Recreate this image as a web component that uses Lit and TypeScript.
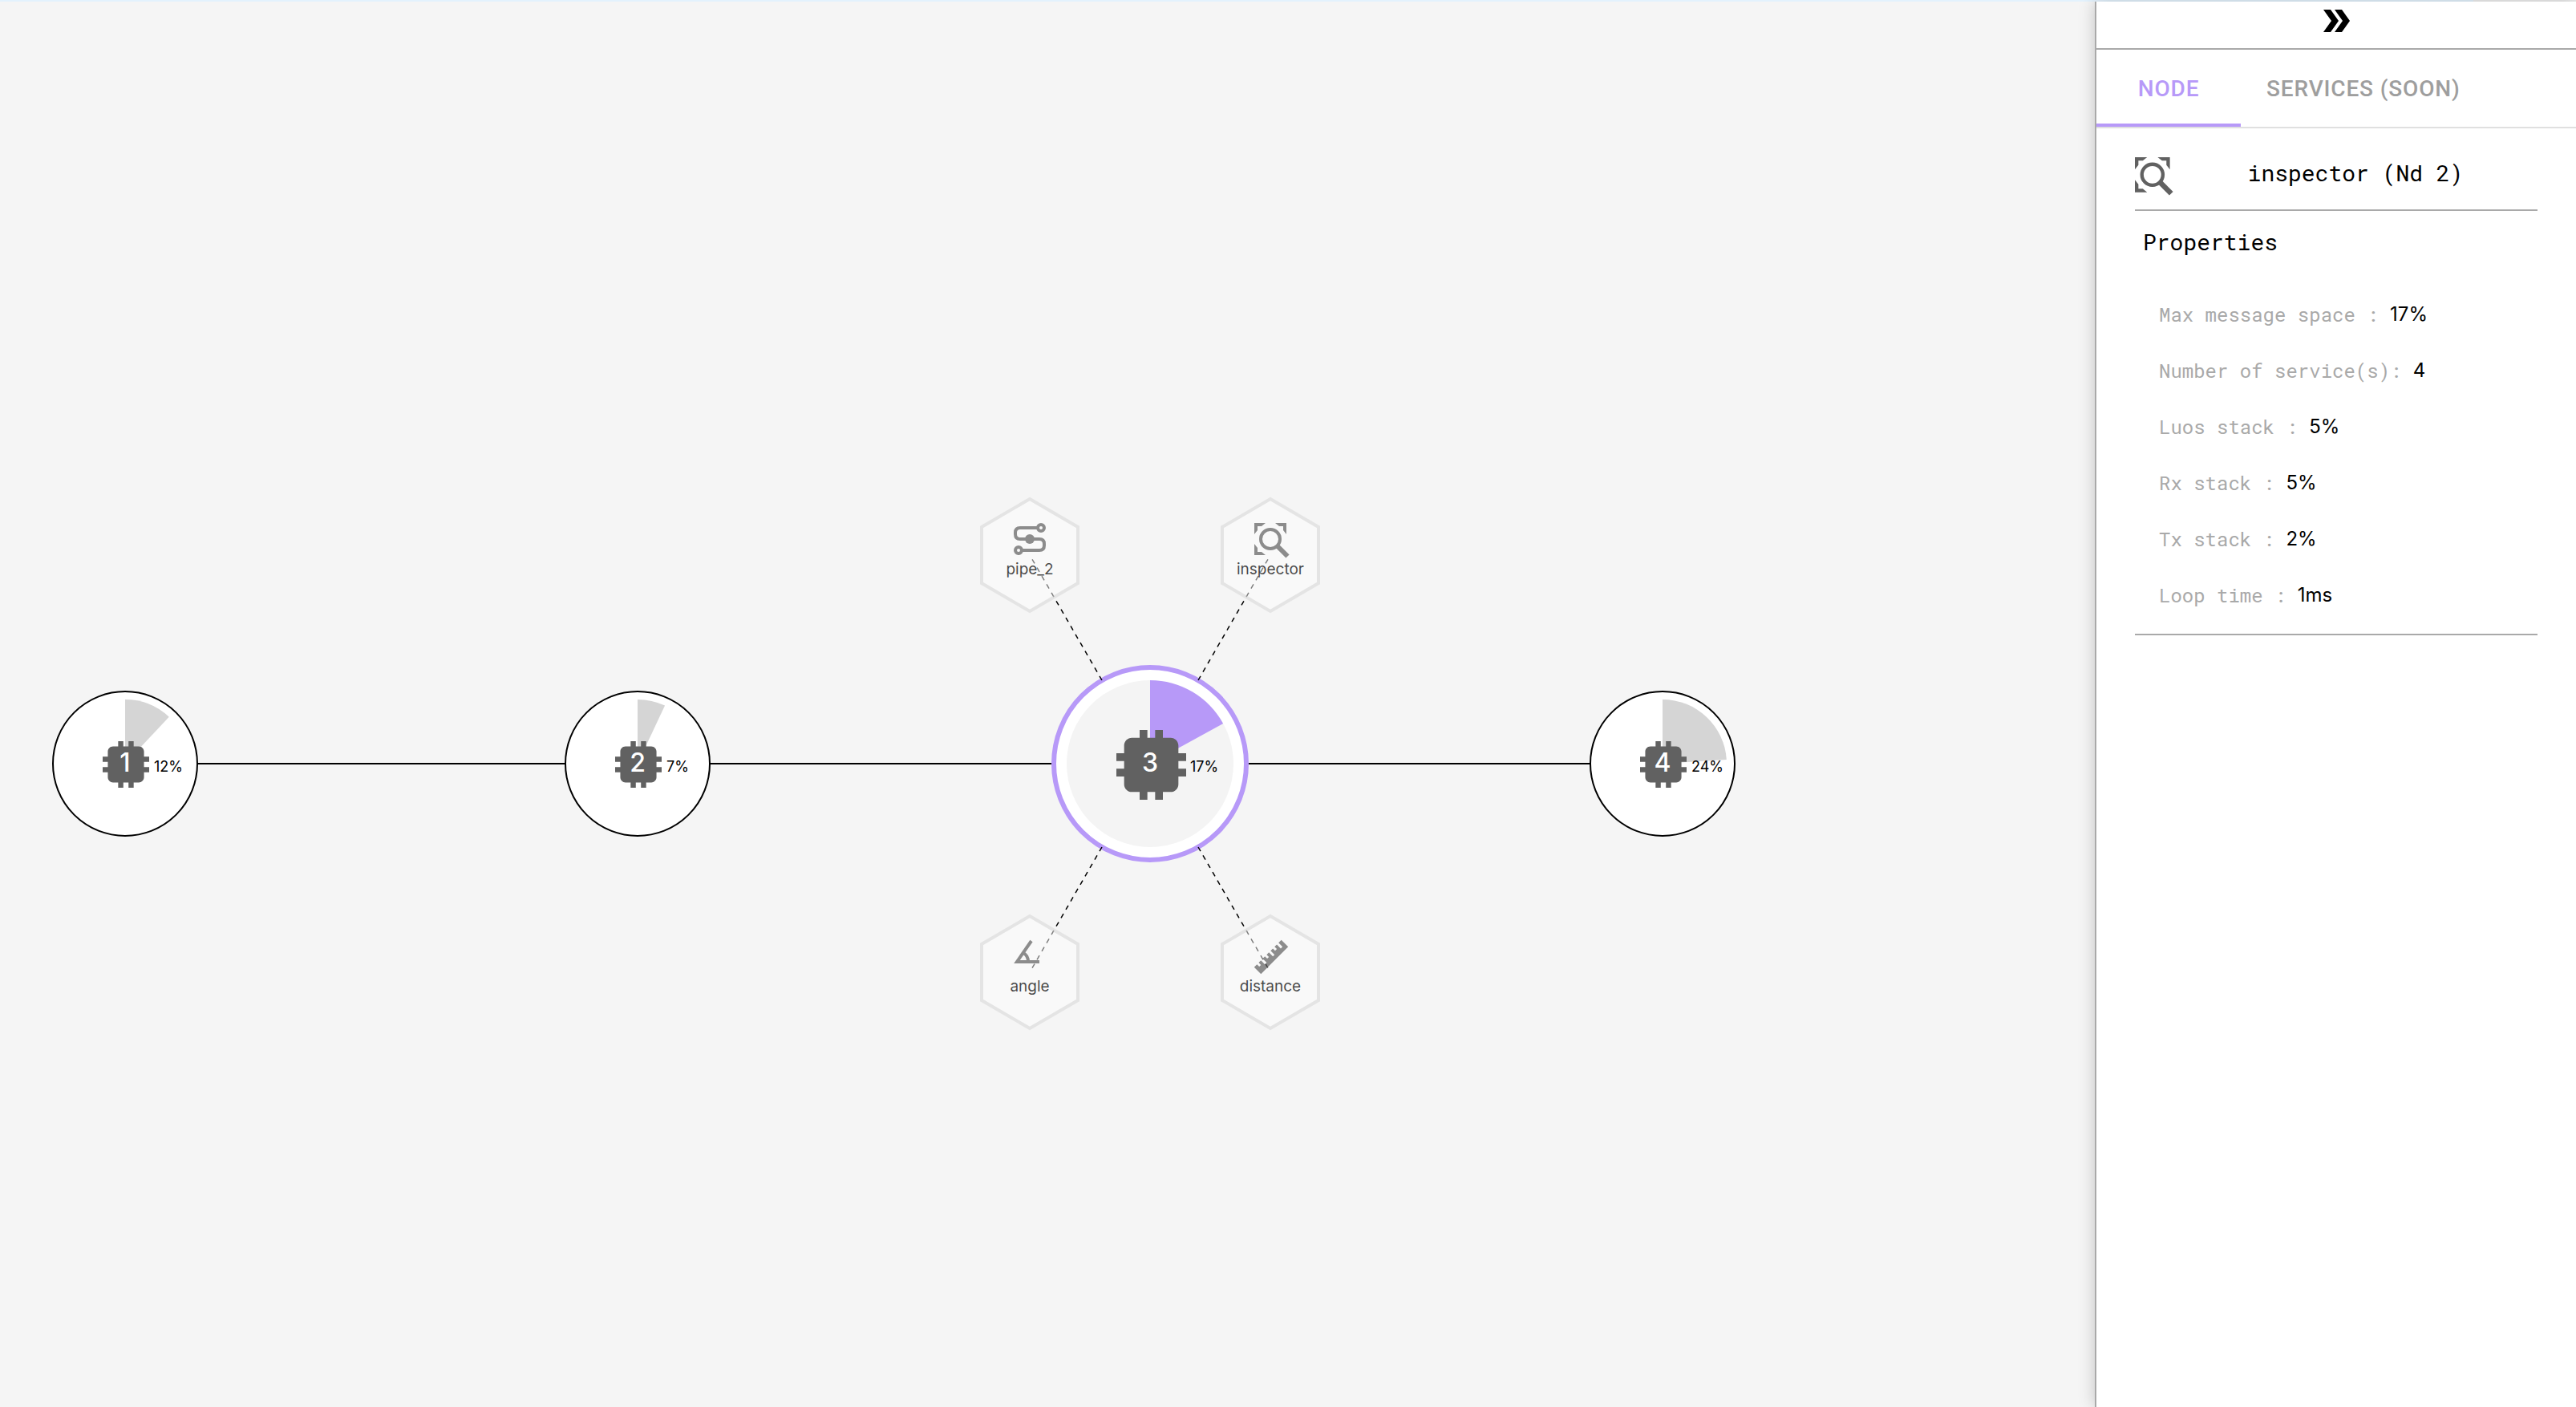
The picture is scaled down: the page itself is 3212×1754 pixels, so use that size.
import { LitElement, html, svg, css } from "lit";
import { customElement, property } from "lit/decorators.js";

interface BoardNode {
  id: number;
  x: number;
  load: number;
  selected?: boolean;
}

interface Service {
  name: string;
  icon: string;
  dx: number;
  dy: number;
}

const AXIS_Y = 950;

const NODES: BoardNode[] = [
  { id: 1, x: 156, load: 12 },
  { id: 2, x: 795, load: 7 },
  { id: 3, x: 1434, load: 17, selected: true },
  { id: 4, x: 2073, load: 24 },
];

const SERVICES: Service[] = [
  { name: "pipe_2", icon: "pipe", dx: -150, dy: -260 },
  { name: "inspector", icon: "inspector", dx: 150, dy: -260 },
  { name: "angle", icon: "angle", dx: -150, dy: 260 },
  { name: "distance", icon: "distance", dx: 150, dy: 260 },
];

const PROPERTIES: [string, string][] = [
  ["Max message space : ", "17%"],
  ["Number of service(s): ", "4"],
  ["Luos stack : ", "5%"],
  ["Rx stack : ", "5%"],
  ["Tx stack : ", "2%"],
  ["Loop time : ", "1ms"],
];

const CHIP =
  "M21 11V9h-2V7c0-1.1-.9-2-2-2h-2V3h-2v2h-2V3H9v2H7c-1.1 0-2 .9-2 2v2H3v2h2v2H3v2h2v2c0 1.1.9 2 2 2h2v2h2v-2h2v2h2v-2h2c1.1 0 2-.9 2-2v-2h2v-2h-2v-2z";

/* Icons are drawn on a 48-unit grid. */
const ICONS: Record<string, unknown> = {
  inspector: svg`
    <path d="M4 4h14l-5 4H8v5l-4 5zM44 4H30l5 4h5v5l4 5zM4 44h14l-5-4H8v-5l-4-5z" fill="currentColor"/>
    <circle cx="24" cy="24" r="12" fill="none" stroke="currentColor" stroke-width="4"/>
    <path d="M32 32L45.5 45.5" fill="none" stroke="currentColor" stroke-width="6"/>`,
  pipe: svg`
    <g fill="none" stroke="currentColor" stroke-width="4">
      <path d="M33 10H12q-6 0-6 6v2q0 6 6 6h24q6 0 6 6v2q0 6-6 6H15"/>
      <circle cx="38" cy="10" r="4"/>
      <circle cx="10" cy="38" r="4"/>
    </g>
    <circle cx="24" cy="24" r="6" fill="currentColor"/>`,
  angle: svg`
    <g fill="none" stroke="currentColor" stroke-width="4">
      <path d="M26 5L8 31H36" stroke-miterlimit="6"/>
      <path d="M16 20q6 3 6 11"/>
    </g>`,
  distance: svg`
    <path fill="currentColor" transform="translate(1 1) scale(2)" d="M1.39 18.36L3.16 16.6L4.58 18L5.64 16.95L4.22 15.54L5.64 14.12L8.11 16.6L9.17 15.54L6.7 13.06L8.11 11.65L9.53 13.06L10.59 12L9.17 10.59L10.59 9.17L13.06 11.65L14.12 10.59L11.65 8.11L13.06 6.7L14.47 8.11L15.54 7.05L14.12 5.64L15.54 4.22L18 6.7L19.07 5.64L16.6 3.16L18.36 1.39L22.61 5.64L5.64 22.61Z"/>`,
};

function sector(cx: number, cy: number, r: number, percent: number) {
  const a = (percent / 100) * Math.PI * 2;
  return `M${cx} ${cy}V${cy - r}A${r} ${r} 0 0 1 ${cx + r * Math.sin(a)} ${cy - r * Math.cos(a)}Z`;
}

@customElement("topology-canvas")
export class TopologyCanvas extends LitElement {
  static styles = css`
    :host { display: block; background: #f5f5f5; overflow: hidden; }
    .board { display: block; width: 100%; height: 100%; font-family: Inter, "Noto Sans", sans-serif; }
    .link { stroke: #000; stroke-width: 2; }
    .dash { stroke: #000; stroke-width: 1.5; stroke-dasharray: 6 6; }
    .ring { fill: #fff; stroke: #000; stroke-width: 2; }
    .ring.selected { stroke: #b799f8; stroke-width: 6; }
    .disc { fill: #f4f4f4; }
    .load { fill: #d5d5d5; }
    .load.selected { fill: #b799f8; }
    .chip { fill: #616161; }
    .number { fill: #fff; font-size: 32px; font-weight: 500; text-anchor: middle; }
    .percent { fill: #000; font-size: 18px; }
    .service { color: #616161; opacity: 0.7; }
    .hexagon { fill: #fff; fill-opacity: 0.7; stroke: #dedede; stroke-width: 4; }
    .name { fill: #000; font-size: 19px; text-anchor: middle; }
  `;

  private node(n: BoardNode) {
    const sel = n.selected ? "selected" : "";
    const size = n.selected ? 87 : 58;
    const cy = AXIS_Y;
    return svg`
      <g>
        <circle class="ring ${sel}" cx=${n.x} cy=${cy} r=${n.selected ? 120 : 90}></circle>
        ${n.selected ? svg`<circle class="disc" cx=${n.x} cy=${cy} r="104"></circle>` : null}
        <path class="load ${sel}" d=${sector(n.x, cy, n.selected ? 104 : 80, n.load)}></path>
        <svg class="chip" viewBox="3 3 18 18" x=${n.x + 1 - Math.floor(size / 2)} y=${cy + 1 - Math.floor(size / 2)}
          width=${size} height=${size}><path d=${CHIP}></path></svg>
        <text class="number" x=${n.x} y=${cy + 10}>${n.id}</text>
        <text class="percent" x=${n.x + (n.selected ? 50 : 36)} y=${cy + 10}>${n.load}%</text>
      </g>`;
  }

  private service(s: Service, hub: BoardNode) {
    const x = hub.x + s.dx;
    const y = AXIS_Y + s.dy;
    return svg`
      <g class="service">
        <path class="hexagon" d="M${x} ${y - 70}l60 35v70l-60 35l-60 -35v-70z"></path>
        <svg viewBox="0 0 48 48" x=${x - 24} y=${y - 44} width="48" height="48">${ICONS[s.icon]}</svg>
        <text class="name" x=${x} y=${y + 24}>${s.name}</text>
      </g>`;
  }

  render() {
    const hub = NODES.find((n) => n.selected)!;
    return html`
      <svg class="board" role="img" aria-label="Network topology">
        ${NODES.slice(1).map(
          (n, i) => svg`<line class="link" x1=${NODES[i].x} y1=${AXIS_Y} x2=${n.x} y2=${AXIS_Y}></line>`,
        )}
        ${NODES.map((n) => this.node(n))}
        ${SERVICES.map(
          (s) => svg`<line class="dash" x1=${hub.x + s.dx * 0.4} y1=${AXIS_Y + s.dy * 0.4}
            x2=${hub.x + s.dx * 0.98} y2=${AXIS_Y + s.dy * 0.98}></line>`,
        )}
        ${SERVICES.map((s) => this.service(s, hub))}
      </svg>`;
  }
}

@customElement("inspector-panel")
export class InspectorPanel extends LitElement {
  @property() heading = "inspector (Nd 2)";

  static styles = css`
    :host {
      display: block;
      box-sizing: border-box;
      background: #fff;
      border-left: 2px solid #a9a9a9;
      box-shadow: 0 0 20px rgba(0, 0, 0, 0.2);
      color: #000;
      font-family: "Roboto Mono", "Liberation Mono", monospace;
    }
    button { font: inherit; border: 0; margin: 0; background: none; cursor: pointer; }
    .collapse {
      display: flex;
      justify-content: center;
      width: 100%;
      height: 60px;
      padding: 10px 0 0;
      border-bottom: 2px solid #a9a9a9;
    }
    .collapse svg { width: 33px; height: 28px; }
    .tabs { display: flex; height: 96px; border-bottom: 2px solid #e0e0e0; font-family: Roboto, sans-serif; }
    .tab {
      min-width: 180px;
      padding: 4px 32px 0;
      color: #9e9e9e;
      font-size: 28px;
      font-weight: 500;
      letter-spacing: 0.03em;
      border-bottom: 4px solid transparent;
    }
    .tab.active { color: #b799f8; border-color: #b799f8; }
    .content { padding: 0 48px; }
    .title {
      display: flex;
      align-items: flex-end;
      box-sizing: border-box;
      height: 103px;
      padding-bottom: 17px;
      border-bottom: 2px solid #a9a9a9;
    }
    .title svg { width: 48px; height: 48px; color: #616161; }
    h1, h2 { margin: 0; font-size: 28px; font-weight: 400; line-height: 36px; }
    h1 { flex: 1; text-align: center; line-height: 56px; }
    h2 { padding: 21px 10px 0; }
    dl { margin: 0; padding: 37px 30px 13px; border-bottom: 2px solid #a9a9a9; font-size: 24px; line-height: 70px; }
    .row { display: flex; white-space: pre; }
    dt { color: #a9a9a9; }
    dd { margin: 0; font-family: Inter, sans-serif; }
  `;

  render() {
    return html`
      <button class="collapse" aria-label="Collapse panel">
        <svg viewBox="0 0 33 28"><path d="M0 0h9l10 14-10 14H0l10-14zM14 0h9l10 14-10 14h-9l10-14z"></path></svg>
      </button>
      <div class="tabs" role="tablist">
        <button class="tab active" role="tab" aria-selected="true">NODE</button>
        <button class="tab" role="tab" aria-selected="false">SERVICES (SOON)</button>
      </div>
      <div class="content">
        <header class="title">
          <svg viewBox="4 4 44 44">${ICONS.inspector}</svg>
          <h1>${this.heading}</h1>
        </header>
        <h2>Properties</h2>
        <dl>
          ${PROPERTIES.map(([k, v]) => html`<div class="row"><dt>${k}</dt><dd>${v}</dd></div>`)}
        </dl>
      </div>`;
  }
}

@customElement("app-root")
export class AppRoot extends LitElement {
  static styles = css`
    :host { display: flex; flex-direction: column; min-height: 100vh; background: #f5f5f5; }
    .loading { height: 2px; background: linear-gradient(90deg, #e3f2fd 0 96%, #eee 96%); }
    .main { display: flex; flex: 1; }
    .canvas { flex: 1; min-width: 0; }
    .panel { flex: 0 0 600px; }
  `;

  render() {
    return html`
      <div class="loading"></div>
      <div class="main">
        <topology-canvas class="canvas"></topology-canvas>
        <inspector-panel class="panel"></inspector-panel>
      </div>`;
  }
}
